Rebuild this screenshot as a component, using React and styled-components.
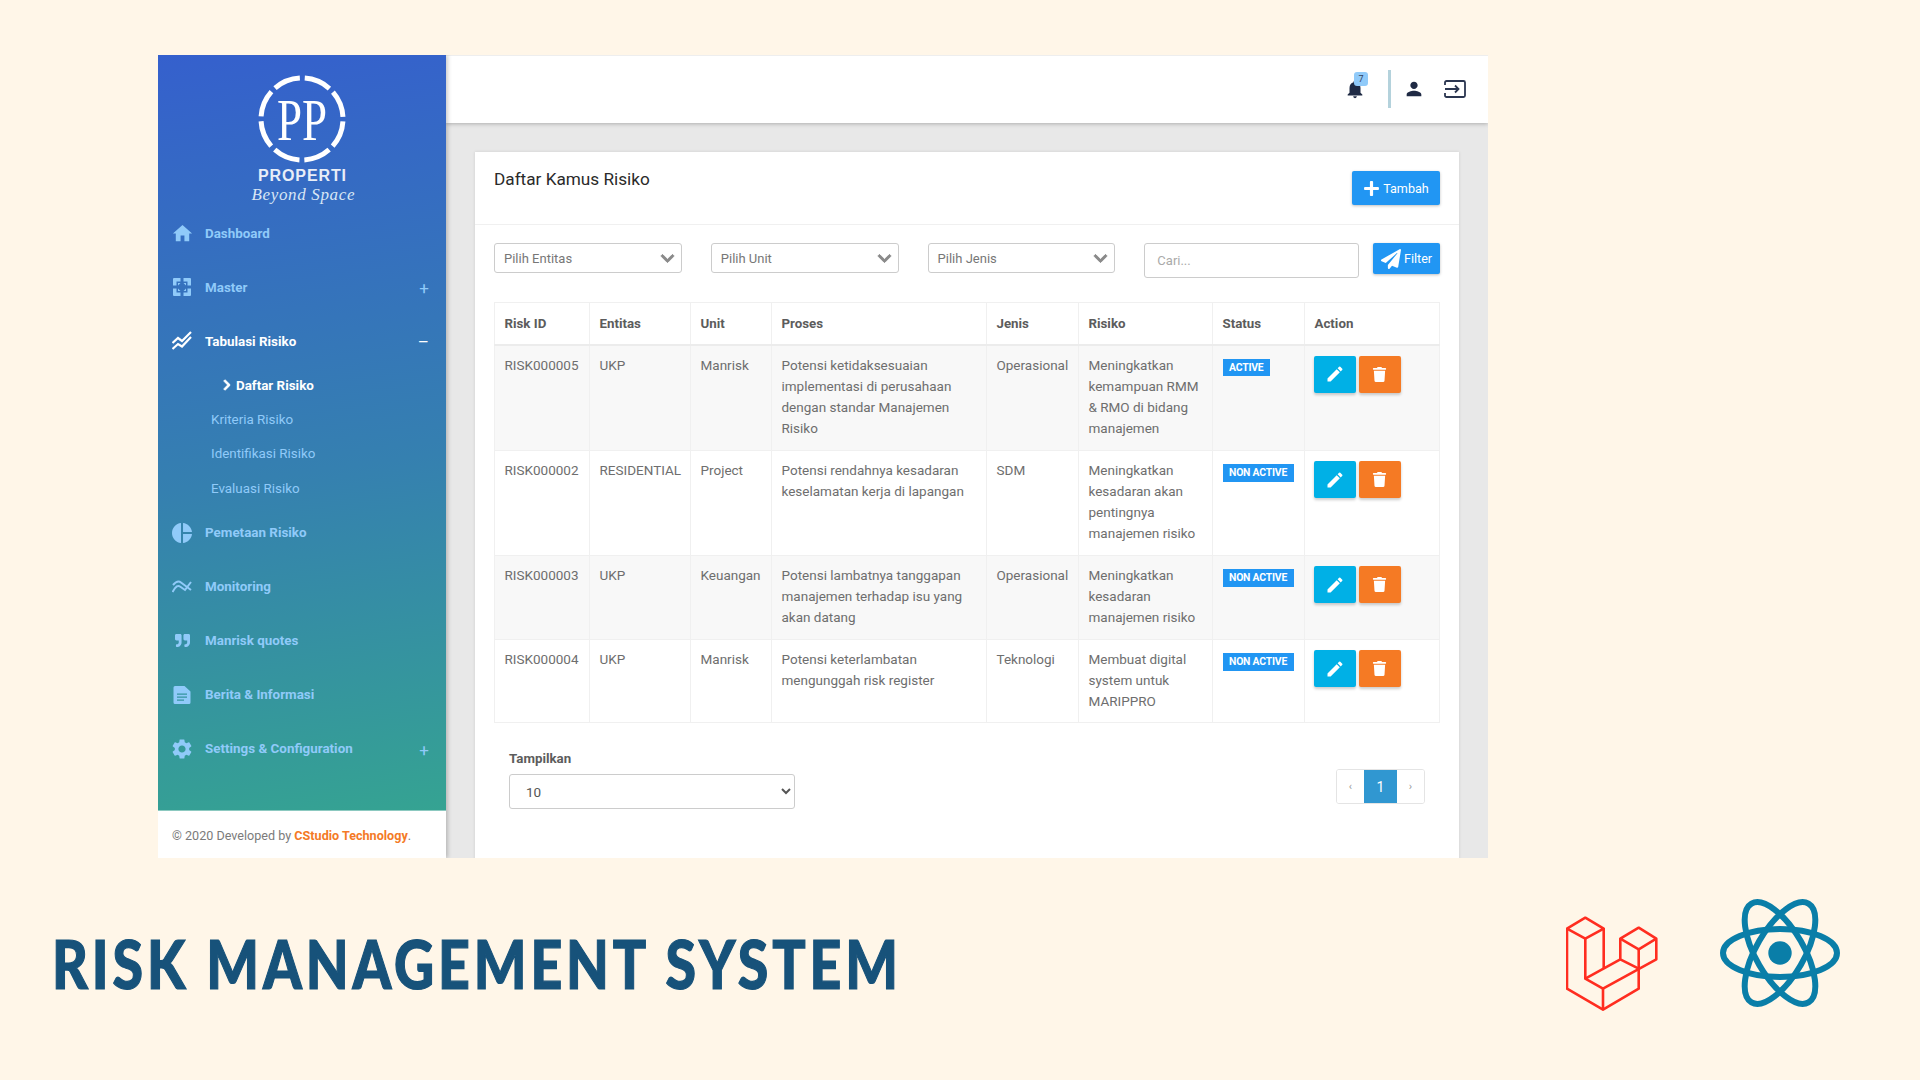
import React from "react";
import styled, { createGlobalStyle } from "styled-components";
import { MdHome, MdPieChart, MdSettings, MdNotifications, MdPerson, MdEdit } from "react-icons/md";
import { FaQuoteRight, FaTrash, FaPaperPlane, FaChevronRight, FaChevronDown, FaPlus } from "react-icons/fa";

const GlobalStyle = createGlobalStyle`
  html, body { margin: 0; padding: 0; background: #fff6e8; }
  * { box-sizing: border-box; }
`;

const Page = styled.div`
  width: 1920px;
  height: 1080px;
  overflow: hidden;
  background: #fff6e8;
  padding: 55px 0 0 158px;
  font-family: Roboto, "Liberation Sans", sans-serif;
`;

const Frame = styled.div`
  width: 1330px;
  height: 803px;
  display: flex;
  overflow: hidden;
  background: #e8e8e8;
`;

const Sidebar = styled.aside`
  width: 288px;
  flex-shrink: 0;
  display: flex;
  flex-direction: column;
  box-shadow: 2px 0 4px rgba(0, 0, 0, 0.2);
  z-index: 2;
`;

const SideBody = styled.div`
  height: 756px;
  flex-shrink: 0;
  background: linear-gradient(172deg, #3560cd 0%, #3580b0 55%, #35a392 100%);
  border-bottom: 1px solid #8cc9c0;
`;

const LogoBox = styled.div`
  height: 151px;
  display: flex;
  justify-content: center;
  padding-top: 18px;
`;

const Nav = styled.nav`
  display: flex;
  flex-direction: column;
`;

const NavItem = styled.div`
  height: 54px;
  display: flex;
  align-items: center;
  padding: 0 17px 0 14px;
  color: ${(p) => (p.$active ? "#fff" : "#90caf9")};
  font-size: 13.4px;
  font-weight: 700;
`;

const NavIcon = styled.span`
  width: 20px;
  height: 20px;
  margin-right: 13px;
  display: flex;
  align-items: center;
  justify-content: center;
  flex-shrink: 0;
  & svg { flex-shrink: 0; }
`;

const NavLabel = styled.span`
  flex: 1;
`;

const Toggle = styled.span`
  font-size: 17px;
  font-weight: 400;
  line-height: 1;
  margin-top: 3px;
`;

const SubNav = styled.div`
  display: flex;
  flex-direction: column;
`;

const SubItem = styled.div`
  height: 34.4px;
  display: flex;
  align-items: center;
  padding-left: ${(p) => (p.$active ? "64px" : "53px")};
  color: ${(p) => (p.$active ? "#fff" : "#90caf9")};
  font-size: 13.4px;
  font-weight: ${(p) => (p.$active ? 700 : 400)};
`;

const Chevron = styled(FaChevronRight)`
  width: 10px;
  height: 12px;
  margin-right: 4px;
  stroke: currentColor;
  stroke-width: 40;
`;

const SideFoot = styled.div`
  flex: 1;
  background: #fff;
  padding: 17px 14px 0;
  font-size: 12.6px;
  color: #7b7b7b;
`;

const FootLink = styled.span`
  color: #f47a26;
  font-weight: 700;
`;

const Main = styled.main`
  flex: 1;
  display: flex;
  flex-direction: column;
  min-width: 0;
`;

const TopBar = styled.header`
  height: 68px;
  flex-shrink: 0;
  background: #fff;
  border-top: 1px solid #eee;
  box-shadow: 0 1px 4px rgba(0, 0, 0, 0.25);
  display: flex;
  align-items: center;
  justify-content: flex-end;
  padding: 0 22px 2px 0;
  color: #1f2a44;
  z-index: 1;
`;

const BellWrap = styled.div`
  position: relative;
  width: 22px;
  height: 22px;
  margin-right: 22px;
`;

const BellBadge = styled.span`
  position: absolute;
  top: -6px;
  left: 10px;
  width: 14px;
  height: 14px;
  border-radius: 3px;
  background: #90caf9;
  color: #33415c;
  font-size: 9px;
  line-height: 14px;
  text-align: center;
`;

const TopDivider = styled.span`
  width: 3px;
  height: 38px;
  background: #b4d2dc;
  margin: 1px 12px 0 0;
`;

const PersonIcon = styled(MdPerson)`
  width: 22px;
  height: 22px;
  margin-right: 19px;
`;

const Content = styled.div`
  flex: 1;
  min-height: 0;
  padding: 29px 29px 0;
`;

const Card = styled.section`
  background: #fff;
  height: 720px;
  box-shadow: 0 0 3px rgba(0, 0, 0, 0.12);
`;

const CardHead = styled.div`
  height: 73px;
  border-bottom: 1px solid #f0f0f0;
  display: flex;
  justify-content: space-between;
  align-items: flex-start;
  padding: 19px 19px 0;
`;

const Title = styled.h2`
  margin: -2px 0 0;
  font-size: 17.2px;
  line-height: 20px;
  font-weight: 400;
  color: #2a2a2a;
`;

const PrimaryButton = styled.button`
  display: flex;
  align-items: center;
  justify-content: center;
  gap: 3px;
  border: 0;
  border-radius: 2px;
  background: #2196f3;
  color: #fff;
  font: 400 12.6px Roboto, sans-serif;
  box-shadow: 0 1px 3px rgba(0, 0, 0, 0.25);
  padding: 0;
  width: ${(p) => p.$w}px;
  height: ${(p) => p.$h}px;
`;

const FilterRow = styled.div`
  display: flex;
  align-items: flex-start;
  padding: 18px 19px 0;
  height: 77px;
`;

const FakeSelect = styled.div`
  width: 188px;
  height: 30px;
  margin-right: 29px;
  border: 1px solid #ccc;
  border-radius: 3px;
  display: flex;
  align-items: center;
  justify-content: space-between;
  padding: 0 6px 0 9px;
  font-size: 13px;
  color: #777;
`;

const SelectArrow = styled(FaChevronDown)`
  width: 15px;
  height: 15px;
  color: #8a8a8a;
  stroke: currentColor;
  stroke-width: 30;
`;

const SearchInput = styled.input`
  width: 215px;
  height: 35px;
  margin-right: 14px;
  border: 1px solid #ccc;
  border-radius: 3px;
  padding: 0 12px;
  font: 400 13px Roboto, sans-serif;
  color: #777;
  &::placeholder { color: #aaa; }
`;

const TableWrap = styled.div`
  padding: 0 19px;
`;

const Table = styled.table`
  width: 945px;
  table-layout: fixed;
  border-collapse: collapse;
  border: 1px solid #e6e6e6;
  font-size: 13.5px;
  line-height: 21px;
  color: #6e6e6e;
`;

const Col = styled.col`
  width: ${(p) => p.$w}px;
`;

const Th = styled.th`
  height: 42px;
  padding: 0 9.5px;
  text-align: left;
  font-weight: 700;
  font-size: 13.3px;
  color: #5c5c5c;
  border: 1px solid #f0f0f0;
  border-bottom: 2px solid #ececec;
`;

const Tr = styled.tr`
  background: ${(p) => (p.$odd ? "#f8f8f8" : "#fff")};
  height: ${(p) => p.$h}px;
`;

const Td = styled.td`
  padding: 9px 9.5px 0;
  vertical-align: top;
  border: 1px solid #f0f0f0;
`;

const Status = styled.span`
  display: inline-block;
  background: #2196f3;
  color: #fff;
  font-size: 10.4px;
  font-weight: 700;
  line-height: 17px;
  height: 17.500px;
  padding: 0 6.5px;
  letter-spacing: -0.2px;
  vertical-align: top;
  margin-top: 4px;
  white-space: nowrap;
`;

const Actions = styled.div`
  display: flex;
  gap: 3px;
  padding-top: 1px;
  margin-left: -1px;
`;

const ActionButton = styled.button`
  width: 42px;
  height: 37px;
  border: 0;
  border-radius: 2px;
  background: ${(p) => p.$bg};
  color: #fff;
  display: flex;
  align-items: center;
  justify-content: center;
  padding: 0;
  box-shadow: 0 2px 3px rgba(0, 0, 0, 0.2);
`;

const Bottom = styled.div`
  display: flex;
  justify-content: space-between;
  padding: 28px 34px 0;
`;

const ShowBlock = styled.div`
  display: flex;
  flex-direction: column;
`;

const ShowLabel = styled.label`
  font-size: 13.3px;
  font-weight: 700;
  color: #5c5c5c;
  line-height: 16px;
  margin-bottom: 7px;
`;

const ShowSelect = styled.select`
  width: 286px;
  height: 35px;
  border: 1px solid #ccc;
  border-radius: 3px;
  background: #fff;
  padding: 0 12px;
  font: 400 13.5px Roboto, sans-serif;
  color: #555;
`;

const Pager = styled.div`
  display: flex;
  height: 35px;
  margin-top: 18px;
  border: 1px solid #e4e4e4;
  border-radius: 3px;
  overflow: hidden;
`;

const PagerCell = styled.span`
  width: ${(p) => (p.$active ? "33px" : "27px")};
  display: flex;
  align-items: center;
  justify-content: center;
  font-size: ${(p) => (p.$active ? "14px" : "11px")};
  background: ${(p) => (p.$active ? "#3097d1" : "#fff")};
  color: ${(p) => (p.$active ? "#fff" : "#999")};
`;

const Banner = styled.div`
  display: flex;
  align-items: center;
  justify-content: space-between;
  height: 222px;
  margin-left: -158px;
  padding: 0 0 0 52px;
`;

const BannerTitle = styled.h1`
  margin: 0 0 10px;
  font-family: Lato, sans-serif;
  font-weight: 900;
  font-size: 66px;
  line-height: 1;
  color: #17527a;
  letter-spacing: 4.6px;
  white-space: nowrap;
  -webkit-text-stroke: 1.2px #17527a;
  transform: scaleX(0.84);
  transform-origin: left center;
`;

const Logos = styled.div`
  display: flex;
  align-items: flex-end;
  gap: 61px;
  padding-right: 79px;
  margin-top: -29px;
`;

const ReactMark = styled.svg`
  margin-bottom: 3px;
`;

const rows = [
  { id: "RISK000005", ent: "UKP", unit: "Manrisk", proses: "Potensi ketidaksesuaian implementasi di perusahaan dengan standar Manajemen Risiko", jenis: "Operasional", risiko: "Meningkatkan kemampuan RMM & RMO di bidang manajemen", status: "ACTIVE", h: 106 },
  { id: "RISK000002", ent: "RESIDENTIAL", unit: "Project", proses: "Potensi rendahnya kesadaran keselamatan kerja di lapangan", jenis: "SDM", risiko: "Meningkatkan kesadaran akan pentingnya manajemen risiko", status: "NON ACTIVE", h: 105 },
  { id: "RISK000003", ent: "UKP", unit: "Keuangan", proses: "Potensi lambatnya tanggapan manajemen terhadap isu yang akan datang", jenis: "Operasional", risiko: "Meningkatkan kesadaran manajemen risiko", status: "NON ACTIVE", h: 84 },
  { id: "RISK000004", ent: "UKP", unit: "Manrisk", proses: "Potensi keterlambatan mengunggah risk register", jenis: "Teknologi", risiko: "Membuat digital system untuk MARIPPRO", status: "NON ACTIVE", h: 83 },
];

const cols = [95, 101, 81, 215, 92, 134, 92, 135];
const heads = ["Risk ID", "Entitas", "Unit", "Proses", "Jenis", "Risiko", "Status", "Action"];

const PpLogo = () => (
  <svg width="130" height="133" viewBox="0 0 130 133">
    <circle cx="65" cy="46" r="41" fill="none" stroke="#fff" strokeWidth="5" strokeDasharray="27.200 5" strokeDashoffset="-2.500" />
    <text x="65" y="67" textAnchor="middle" textLength="50" lengthAdjust="spacingAndGlyphs" fontFamily="Liberation Serif, serif" fontSize="60" fill="#fff">PP</text>
    <text x="65" y="108" textAnchor="middle" fontFamily="Liberation Sans, sans-serif" fontWeight="700" fontSize="16" fill="#e8eef8" textLength="88" lengthAdjust="spacing">PROPERTI</text>
    <text x="66" y="127" textAnchor="middle" textLength="103" fontFamily="Liberation Serif, serif" fontStyle="italic" fontSize="17" fill="#d8e6f5">Beyond Space</text>
  </svg>
);

const MasterIcon = () => (
  <svg width="20" height="20" viewBox="0 0 20 20" fill="currentColor">
    <path d="M1 2a1 1 0 0 1 1-1h6.500v3.500H4.500v4H1z" />
    <path d="M19 2a1 1 0 0 0-1-1h-6.500v3.500h4v4H19z" />
    <path d="M1 18a1 1 0 0 0 1 1h6.500v-3.500H4.500v-4H1z" />
    <path d="M19 18a1 1 0 0 1-1 1h-6.500v-3.500h4v-4H19z" />
    <path d="M6 6h2.500L6 8.500zM14 6h-2.500L14 8.500zM6 14h2.500L6 11.500zM14 14h-2.500L14 11.500z" />
  </svg>
);

const ChartIcon = () => (
  <svg width="20" height="20" viewBox="0 0 20 20" fill="none" stroke="currentColor" strokeWidth="2.200">
    <path d="M0.500 12 L6 7 L10 10 L19 1" />
    <path d="M0.500 18 L6 13 L10 15.500 L19 6" />
  </svg>
);

const MonitorIcon = () => (
  <svg width="20" height="14" viewBox="0 0 20 14" fill="none" stroke="currentColor" strokeWidth="2">
    <path d="M0.500 12 C4 6 6 5 8 6.500 L13 10 L19 2" />
    <path d="M1 5 C4 1.500 7 1 9 2.500 L19 10" />
  </svg>
);

const FileIcon = () => (
  <svg width="18" height="18" viewBox="0 0 18 18" fill="currentColor">
    <path fillRule="evenodd" d="M2 0h9.500L17.500 5.500V16.500a1.500 1.500 0 0 1-1.500 1.500H2A1.500 1.500 0 0 1 .5 16.500V1.500A1.500 1.500 0 0 1 2 0zM4 7.500v1.300h10V7.500zM4 10.500v1.300h10v-1.300zM4 13.500v1.300h7v-1.300z" />
  </svg>
);

const ExitIcon = () => (
  <svg width="22" height="18" viewBox="0 0 22 18" fill="none" stroke="#2b3650" strokeWidth="1.800">
    <path d="M1 5V2.500A1.500 1.500 0 0 1 2.500 1h17A1.500 1.500 0 0 1 21 2.500v13a1.500 1.500 0 0 1-1.500 1.500h-17A1.500 1.500 0 0 1 1 15.500V13" />
    <path d="M1 9h13M11 5.500 14.500 9 11 12.500" />
  </svg>
);

const LaravelLogo = () => (
  <svg width="92" height="95" viewBox="0 0 92 95" fill="none" stroke="#ff2d20" strokeWidth="2.600" strokeLinejoin="round">
    <path d="M1 12.700 L19.300 1.700 L37.700 12.700 L19.300 22.700 Z" />
    <path d="M1 12.700 V72.700 L37 93.700 L72.700 72.700 V33.300" />
    <path d="M19.300 22.700 V62.700 L37 72.700 L90.300 43.300 V22.700 L72.700 11.700 L54.300 22.700 L72.700 33.300 L90.300 22.700" />
    <path d="M54.300 22.700 V43.300 L72.700 52.700" />
    <path d="M37.700 12.700 V52.700" />
    <path d="M19.300 62.700 L54.300 43.300" />
    <path d="M37 72.700 V93.700" />
  </svg>
);

const ReactLogo = () => (
  <ReactMark width="122" height="110" viewBox="-61 -55 122 110" fill="none" stroke="#0a7ea8" strokeWidth="6">
    <ellipse rx="57" ry="24" />
    <ellipse rx="57" ry="24" transform="rotate(60)" />
    <ellipse rx="57" ry="24" transform="rotate(120)" />
    <circle r="11.700" fill="#0a7ea8" stroke="none" />
  </ReactMark>
);

const App = () => (
  <Page>
    <GlobalStyle />
    <Frame>
      <Sidebar>
        <SideBody>
          <LogoBox><PpLogo /></LogoBox>
          <Nav>
            <NavItem><NavIcon><MdHome size={23} /></NavIcon><NavLabel>Dashboard</NavLabel></NavItem>
            <NavItem><NavIcon><MasterIcon /></NavIcon><NavLabel>Master</NavLabel><Toggle>+</Toggle></NavItem>
            <NavItem $active><NavIcon><ChartIcon /></NavIcon><NavLabel>Tabulasi Risiko</NavLabel><Toggle>–</Toggle></NavItem>
            <SubNav>
              <SubItem $active><Chevron />Daftar Risiko</SubItem>
              <SubItem>Kriteria Risiko</SubItem>
              <SubItem>Identifikasi Risiko</SubItem>
              <SubItem>Evaluasi Risiko</SubItem>
            </SubNav>
            <NavItem><NavIcon><MdPieChart size={24} /></NavIcon><NavLabel>Pemetaan Risiko</NavLabel></NavItem>
            <NavItem><NavIcon><MonitorIcon /></NavIcon><NavLabel>Monitoring</NavLabel></NavItem>
            <NavItem><NavIcon><FaQuoteRight size={15} /></NavIcon><NavLabel>Manrisk quotes</NavLabel></NavItem>
            <NavItem><NavIcon><FileIcon /></NavIcon><NavLabel>Berita &amp; Informasi</NavLabel></NavItem>
            <NavItem><NavIcon><MdSettings size={24} /></NavIcon><NavLabel>Settings &amp; Configuration</NavLabel><Toggle>+</Toggle></NavItem>
          </Nav>
        </SideBody>
        <SideFoot>© 2020 Developed by <FootLink>CStudio Technology</FootLink>.</SideFoot>
      </Sidebar>
      <Main>
        <TopBar>
          <BellWrap>
            <MdNotifications size={22} />
            <BellBadge>7</BellBadge>
          </BellWrap>
          <TopDivider />
          <PersonIcon />
          <ExitIcon />
        </TopBar>
        <Content>
          <Card>
            <CardHead>
              <Title>Daftar Kamus Risiko</Title>
              <PrimaryButton $w={88} $h={34}><FaPlus size={17} />Tambah</PrimaryButton>
            </CardHead>
            <FilterRow>
              <FakeSelect>Pilih Entitas<SelectArrow /></FakeSelect>
              <FakeSelect>Pilih Unit<SelectArrow /></FakeSelect>
              <FakeSelect>Pilih Jenis<SelectArrow /></FakeSelect>
              <SearchInput placeholder="Cari..." />
              <PrimaryButton $w={67} $h={31}><FaPaperPlane size={20} />Filter</PrimaryButton>
            </FilterRow>
            <TableWrap>
              <Table>
                <colgroup>
                  {cols.map((w, i) => <Col key={i} $w={w} />)}
                </colgroup>
                <thead>
                  <tr>{heads.map((h) => <Th key={h}>{h}</Th>)}</tr>
                </thead>
                <tbody>
                  {rows.map((r, i) => (
                    <Tr key={r.id} $odd={i % 2 === 0} $h={r.h}>
                      <Td>{r.id}</Td>
                      <Td>{r.ent}</Td>
                      <Td>{r.unit}</Td>
                      <Td>{r.proses}</Td>
                      <Td>{r.jenis}</Td>
                      <Td>{r.risiko}</Td>
                      <Td><Status>{r.status}</Status></Td>
                      <Td>
                        <Actions>
                          <ActionButton $bg="#00b0e6"><MdEdit size={20} /></ActionButton>
                          <ActionButton $bg="#f57a24"><FaTrash size={15} /></ActionButton>
                        </Actions>
                      </Td>
                    </Tr>
                  ))}
                </tbody>
              </Table>
            </TableWrap>
            <Bottom>
              <ShowBlock>
                <ShowLabel>Tampilkan</ShowLabel>
                <ShowSelect defaultValue="10"><option>10</option></ShowSelect>
              </ShowBlock>
              <Pager>
                <PagerCell>‹</PagerCell>
                <PagerCell $active>1</PagerCell>
                <PagerCell>›</PagerCell>
              </Pager>
            </Bottom>
          </Card>
        </Content>
      </Main>
    </Frame>
    <Banner>
      <BannerTitle>RISK MANAGEMENT SYSTEM</BannerTitle>
      <Logos>
        <LaravelLogo />
        <ReactLogo />
      </Logos>
    </Banner>
  </Page>
);

export default App;
